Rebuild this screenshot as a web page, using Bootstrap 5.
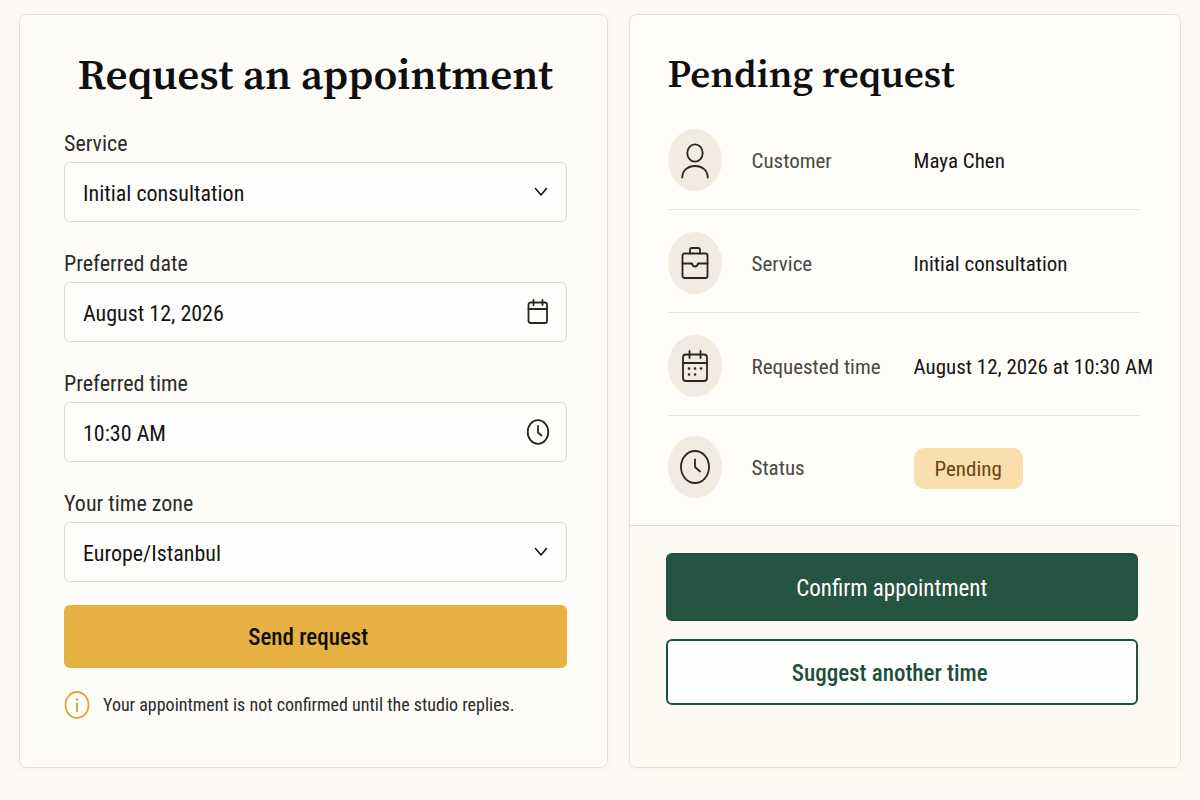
<!doctype html>
<html lang="en">
<head>
<meta charset="utf-8">
<meta name="viewport" content="width=device-width, initial-scale=1">
<title>Request an appointment</title>
<link href="https://cdn.jsdelivr.net/npm/bootstrap@5.3.0/dist/css/bootstrap.min.css" rel="stylesheet">
<style>
  body { background: #fdf9f4; color: #151515; font-family: "Roboto Condensed", Roboto, "Liberation Sans", sans-serif; }
  .booking-grid { display: grid; grid-template-columns: 1fr; gap: 21px; padding: 14px 19px 31px; }
  @media (min-width: 992px) { .booking-grid { grid-template-columns: 588fr 552fr; } }
  .panel { --bs-card-border-color: #e3e0d8; --bs-card-border-radius: 8px; --bs-card-inner-border-radius: 7px; --bs-card-bg: #fdfcf9; box-shadow: 0 2px 8px rgba(90, 70, 40, .05); }
  .panel-form { padding: 31px 40px 48px 44px; }
  .panel-details { --bs-card-bg: #fefdfa; }
  .details-body { padding: 31px 40px 11px 38px; }
  .details-body dl { margin: 5px 0 0; }
  .details-footer { padding: 27px 42px 60px 36px; background: #fdfaf4; border-top: 1px solid #dfdcd6; border-radius: 0 0 7px 7px; }
  h1, h2 { font-family: "Source Serif 4", "Noto Serif", "Liberation Serif", serif; font-weight: 600; line-height: 56px; color: #0f0f0f; margin: 0; }
  h1 { font-size: 43px; }
  h2 { font-size: 39px; }
  .field { margin-top: 28px; }
  .field .form-label { display: block; font-size: 22px; line-height: 24px; padding-top: 2px; margin-bottom: 6px; color: #2b2b2b; }
  .field .form-control, .field .form-select { height: 60px; padding: 2px 56px 0 18px; font-size: 22px; color: #151515; background-color: #fefefd; border: 1px solid #d9d7d2; border-radius: 6px; }
  .field .form-select { background-image: url("data:image/svg+xml,%3Csvg xmlns='http://www.w3.org/2000/svg' viewBox='0 0 14 10' fill='none' stroke='%23151515' stroke-width='1.6' stroke-linecap='round' stroke-linejoin='round'%3E%3Cpath d='M1.5 1.5 7 8l5.500-6.500'/%3E%3C/svg%3E"); background-size: 14px 10px; background-position: right 18px center; }
  .field-icon { right: 17px; top: 50%; transform: translateY(-50%); pointer-events: none; }
  .action { width: 100%; font-size: 23px; line-height: 28px; font-weight: 500; border-radius: 6px; border-width: 2px; }
  .action-send { --bs-btn-bg: #e7b043; --bs-btn-border-color: #e7b043; --bs-btn-color: #100d05; --bs-btn-hover-bg: #dba536; --bs-btn-hover-border-color: #dba536; padding: 17px 28px 14px 14px; margin-top: 23px; }
  .action-confirm { --bs-btn-bg: #265442; --bs-btn-border-color: #205040; --bs-btn-color: #fff; --bs-btn-hover-bg: #1d4636; --bs-btn-hover-color: #fff; font-weight: 400; padding: 20px 34px 16px 14px; }
  .action-suggest { --bs-btn-bg: #fefefd; --bs-btn-border-color: #205040; --bs-btn-color: #1b4f3b; --bs-btn-hover-bg: #eef4f0; --bs-btn-hover-color: #1b4f3b; padding: 19px 38px 15px 14px; }
  .notice { font-size: 18px; line-height: 28px; margin-top: 23px; color: #2b2b2b; gap: 13px; }
  .detail-row { display: grid; grid-template-columns: 84px 162px 1fr; align-items: center; height: 103px; padding-top: 4px; border-bottom: 1px solid #e6e4df; font-size: 21px; }
  .detail-row:last-child { height: 98px; border-bottom: 0; }
  .detail-row dt { font-weight: 400; color: #484848; }
  .detail-row dt, .detail-row dd { margin: 0; padding-top: 3px; white-space: nowrap; }
  .disc { width: 54px; height: 62px; border-radius: 50%; background: #f2ebe1; display: flex; align-items: center; justify-content: center; }
  .status-pill { font-size: 21px; line-height: 24px; font-weight: 400; padding: 9px 21px 8px; border-radius: 10px; background: #f9dfae; color: #6d420c; }
  .line-art { fill: none; stroke: #282723; stroke-width: 1.8; stroke-linecap: round; stroke-linejoin: round; flex: none; }
  .line-art-amber { stroke: #dfa735; }
</style>
</head>
<body>
<main class="booking-grid">
  <section class="card panel">
    <form class="panel-form" onsubmit="return false">
      <h1 class="text-center">Request an appointment</h1>
      <div class="field">
        <label class="form-label" for="service">Service</label>
        <select class="form-select" id="service"><option>Initial consultation</option></select>
      </div>
      <div class="field">
        <label class="form-label" for="date">Preferred date</label>
        <div class="position-relative">
          <input class="form-control" id="date" type="text" value="August 12, 2026">
          <svg class="field-icon line-art position-absolute" width="24" height="28" viewBox="0 0 24 28"><rect x="2.500" y="4.500" width="18.500" height="20.500" rx="2"/><path d="M2.500 11h18.500M7.500 2v5M16.500 2v5"/></svg>
        </div>
      </div>
      <div class="field">
        <label class="form-label" for="time">Preferred time</label>
        <div class="position-relative">
          <input class="form-control" id="time" type="text" value="10:30 AM">
          <svg class="field-icon line-art position-absolute" width="24" height="28" viewBox="0 0 24 28"><ellipse cx="12" cy="14" rx="10.300" ry="11.800"/><path d="M12 8v6.500l3.500 3"/></svg>
        </div>
      </div>
      <div class="field">
        <label class="form-label" for="zone">Your time zone</label>
        <select class="form-select" id="zone"><option>Europe/Istanbul</option></select>
      </div>
      <button class="btn action action-send" type="submit">Send request</button>
      <div class="notice d-flex align-items-center">
        <svg class="line-art line-art-amber" width="26" height="28" viewBox="0 0 26 28"><ellipse cx="13" cy="14" rx="11.500" ry="13"/><path d="M13 12.500v7.500" stroke-width="2"/><path d="M13 8.200v.4" stroke-width="2.400"/></svg>
        <span>Your appointment is not confirmed until the studio replies.</span>
      </div>
    </form>
  </section>

  <section class="card panel panel-details">
    <div class="details-body">
      <h2>Pending request</h2>
      <dl>
        <div class="detail-row">
          <span class="disc"><svg class="line-art" width="30" height="38" viewBox="0 0 30 38"><ellipse cx="15" cy="12" rx="7.700" ry="8.700"/><path d="M2.200 36.500c.3-7 5.200-11.500 12.800-11.500s12.500 4.500 12.800 11.500"/></svg></span>
          <dt>Customer</dt><dd>Maya Chen</dd>
        </div>
        <div class="detail-row">
          <span class="disc"><svg class="line-art" width="30" height="34" viewBox="0 0 30 34"><rect x="2.500" y="7.500" width="25" height="24.500" rx="2"/><path d="M10 7.500V4Q10 2 12 2h6q2 0 2 2V7.500M2.500 17.500h9.500q.5 3 3 3t3-3h9.500"/></svg></span>
          <dt>Service</dt><dd>Initial consultation</dd>
        </div>
        <div class="detail-row">
          <span class="disc"><svg class="line-art" width="30" height="34" viewBox="0 0 30 34"><rect x="3" y="5.500" width="24" height="26.500" rx="3"/><path d="M3 14h24M9.500 2v7M20.500 2v7"/><path d="M9 19.500h.1M15 19.500h.1M21 19.500h.1M9 25.500h.1M15 25.500h.1" stroke-width="2.600"/></svg></span>
          <dt>Requested time</dt><dd>August 12, 2026 at 10:30 AM</dd>
        </div>
        <div class="detail-row">
          <span class="disc"><svg class="line-art" width="32" height="36" viewBox="0 0 32 36"><ellipse cx="16" cy="18" rx="14" ry="16"/><path d="M16 10.500v7.500l5 4.500"/></svg></span>
          <dt>Status</dt><dd><span class="badge status-pill">Pending</span></dd>
        </div>
      </dl>
    </div>
    <div class="details-footer flex-grow-1">
      <div class="d-grid" style="gap:18px">
        <button class="btn action action-confirm" type="button">Confirm appointment</button>
        <button class="btn action action-suggest" type="button">Suggest another time</button>
      </div>
    </div>
  </section>
</main>
<script src="https://cdn.jsdelivr.net/npm/bootstrap@5.3.0/dist/js/bootstrap.bundle.min.js"></script>
</body>
</html>
